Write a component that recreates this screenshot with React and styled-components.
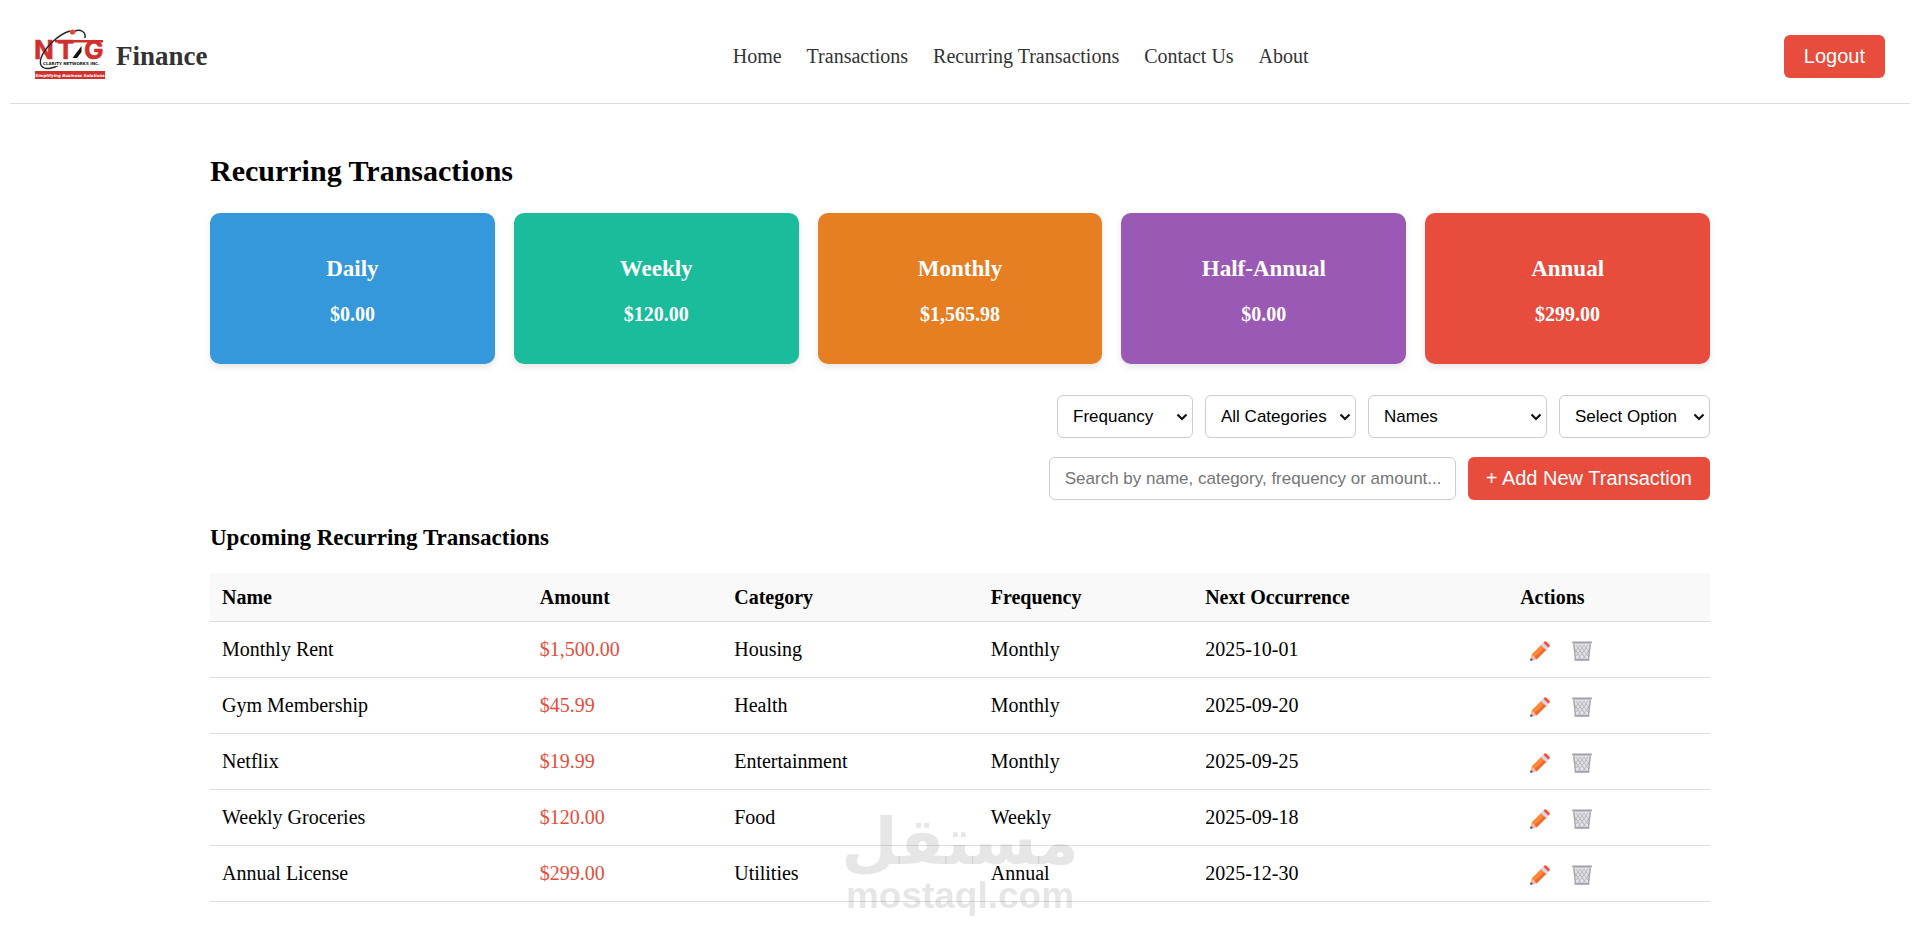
import styled, { createGlobalStyle } from "styled-components";

const GlobalStyle = createGlobalStyle`
  * {
    box-sizing: border-box;
  }

  body {
    margin: 10px;
    background-color: #fff;
    color: #000;
    font-family: "Liberation Serif", "Times New Roman", serif;
    font-size: 20px;
    line-height: 23px;
  }

  h1, h2, h3, p, ul {
    margin: 0;
    padding: 0;
  }
`;

const StyledHeader = styled.header`
  display: flex;
  justify-content: space-between;
  align-items: center;
  padding: 18px 25px 19px;
  border-bottom: 1px solid #ddd;
`;

const Brand = styled.a`
  display: flex;
  align-items: center;
  gap: 11px;
  color: #333;
  font-size: 27px;
  font-weight: bold;
  text-decoration: none;
`;

const NavList = styled.ul`
  display: flex;
  gap: 25px;
  padding-left: 50px;
  list-style: none;
`;

const NavLink = styled.a`
  color: #333;
  text-decoration: none;
`;

const Button = styled.button`
  height: 43px;
  padding: 0 ${({ $padding }) => $padding || "20px"};
  border: none;
  border-radius: 6px;
  background-color: #e74c3c;
  color: #fff;
  font-family: "Liberation Sans", Arial, sans-serif;
  font-size: 20px;
  cursor: pointer;
`;

const Main = styled.main`
  max-width: 1500px;
  margin: 50px auto 0;
`;

const PageTitle = styled.h1`
  font-size: 30px;
  line-height: 34px;
`;

const SectionTitle = styled.h2`
  margin-top: 24px;
  font-size: 23px;
  line-height: 27px;
`;

const SummaryGrid = styled.section`
  display: grid;
  grid-template-columns: repeat(5, 1fr);
  gap: 19px;
  margin-top: 25px;
`;

const SummaryCard = styled.article`
  display: flex;
  flex-direction: column;
  align-items: center;
  gap: 20px;
  padding: 42px 19px 38px;
  border-radius: 10px;
  background-color: ${({ $color }) => $color};
  box-shadow: 0 3px 6px rgba(0, 0, 0, 0.1);
  color: #fff;
  font-weight: bold;
`;

const CardTitle = styled.h3`
  font-size: 23px;
  line-height: 28px;
`;

const Toolbar = styled.section`
  display: flex;
  flex-direction: column;
  gap: 19px;
  margin-top: 31px;
`;

const ToolbarRow = styled.div`
  display: flex;
  justify-content: flex-end;
  gap: 12px;
`;

const SelectBox = styled.span`
  display: grid;
  align-items: center;
  width: ${({ $width }) => $width};

  > * {
    grid-area: 1 / 1;
  }

  svg {
    justify-self: end;
    margin-right: 5px;
    pointer-events: none;
  }
`;

const StyledSelect = styled.select`
  appearance: none;
  width: 100%;
  height: 43px;
  padding: 0 15px;
  border: 1px solid #ccc;
  border-radius: 6px;
  background-color: #fff;
  color: #000;
  font-family: "Liberation Sans", Arial, sans-serif;
  font-size: 17px;
`;

const SearchInput = styled.input`
  width: 407px;
  height: 43px;
  padding: 0 15px;
  border: 1px solid #ccc;
  border-radius: 6px;
  font-family: "Liberation Sans", Arial, sans-serif;
  font-size: 17px;

  &::placeholder {
    color: #757575;
  }
`;

const Table = styled.table`
  width: 100%;
  margin-top: 22px;
  border-spacing: 0;
`;

const HeadCell = styled.th`
  padding: 13px 12px 12px;
  border-bottom: 1px solid #ddd;
  background-color: #f9f9f9;
  text-align: left;
`;

const Cell = styled.td`
  height: 56px;
  padding: 0 12px;
  border-bottom: 1px solid #ddd;
  color: ${({ $amount }) => ($amount ? "#e74c3c" : "inherit")};
`;

const Actions = styled.div`
  display: flex;
`;

const IconButton = styled.button`
  display: flex;
  padding: 3px 12px 0 10px;
  border: none;
  background: none;
  cursor: pointer;
`;

const Watermark = styled.div`
  position: fixed;
  left: 50%;
  bottom: 19px;
  transform: translateX(-50%);
  color: rgba(128, 128, 128, 0.2);
  text-align: center;
  pointer-events: none;
`;

const WatermarkName = styled.div`
  font-family: "DejaVu Sans", sans-serif;
  font-size: 65px;
  font-weight: bold;
  line-height: 68px;
`;

const WatermarkDomain = styled.div`
  font-family: "Liberation Sans", Arial, sans-serif;
  font-size: 37px;
  font-weight: bold;
  line-height: 40px;
`;

const navItems = [
  "Home",
  "Transactions",
  "Recurring Transactions",
  "Contact Us",
  "About",
];

const summaries = [
  { title: "Daily", total: "$0.00", color: "#3498db" },
  { title: "Weekly", total: "$120.00", color: "#1abc9c" },
  { title: "Monthly", total: "$1,565.98", color: "#e67e22" },
  { title: "Half-Annual", total: "$0.00", color: "#9b59b6" },
  { title: "Annual", total: "$299.00", color: "#e74c3c" },
];

const filters = [
  { label: "Frequancy", width: "136px" },
  { label: "All Categories", width: "151px" },
  { label: "Names", width: "179px" },
  { label: "Select Option", width: "151px" },
];

const columns = [
  "Name",
  "Amount",
  "Category",
  "Frequency",
  "Next Occurrence",
  "Actions",
];

const transactions = [
  ["Monthly Rent", "$1,500.00", "Housing", "Monthly", "2025-10-01"],
  ["Gym Membership", "$45.99", "Health", "Monthly", "2025-09-20"],
  ["Netflix", "$19.99", "Entertainment", "Monthly", "2025-09-25"],
  ["Weekly Groceries", "$120.00", "Food", "Weekly", "2025-09-18"],
  ["Annual License", "$299.00", "Utilities", "Annual", "2025-12-30"],
];

function Logo() {
  return (
    <svg width="70" height="56" viewBox="0 0 70 56" aria-hidden="true">
      <g
        fill="#d0312d"
        stroke="#d0312d"
        strokeWidth="0.5"
        fontFamily="Inter, sans-serif"
        fontSize="26"
      >
        <text x="-1" y="31">
          N
        </text>
        <text x="22" y="31">
          T
        </text>
        <text x="49" y="31">
          G
        </text>
      </g>
      <path d="M20 13.300h48" fill="none" stroke="#d0312d" strokeWidth="2.500" />
      <path
        d="M35 3C24 6 10 19 6 30C4 37 7 41 14 40.500C19 40 23 38 26 36"
        fill="none"
        stroke="#23232b"
        strokeWidth="1.400"
      />
      <path
        d="M40 3C46 1 51 4 50 10"
        fill="none"
        stroke="#23232b"
        strokeWidth="1.500"
      />
      <path d="M46.500 18L37.500 30h4.500l4.500-6z" fill="#111" />
      <circle cx="37.500" cy="4" r="2.600" fill="#e8432e" />
      <rect x="8" y="32" width="62" height="6" fill="#fff" />
      <text
        x="8"
        y="37"
        fill="#111"
        fontFamily="DejaVu Sans, sans-serif"
        fontSize="4"
        fontWeight="bold"
      >
        CLARITY NETWORKS INC.
      </text>
      <rect y="43" width="70" height="8" fill="#d0312d" />
      <text
        x="35"
        y="49"
        fill="#fff"
        textAnchor="middle"
        fontFamily="DejaVu Sans, sans-serif"
        fontSize="4"
        fontStyle="italic"
      >
        Simplifying Business Solutions
      </text>
    </svg>
  );
}

function ChevronIcon() {
  return (
    <svg width="12" height="8" viewBox="0 0 12 8" aria-hidden="true">
      <path
        d="M1.500 1.500L6 6l4.500-4.500"
        fill="none"
        stroke="#111"
        strokeWidth="2.200"
      />
    </svg>
  );
}

function PencilIcon() {
  return (
    <svg width="20" height="20" viewBox="0 0 20 20" aria-hidden="true">
      <path d="M1.500 13.500L12 3l5 5L6.500 18.500z" fill="#ff8a35" />
      <path d="M4.500 16.500L15 6l2 2L6.500 18.500z" fill="#f4662f" />
      <path d="M1.500 13.500L0.300 19.700L6.500 18.500z" fill="#f0b8a8" />
      <path d="M0.700 17L0.200 19.800L3 19.300z" fill="#463a4b" />
      <path d="M11 4l2.500-2.500l5 5l-2.500 2.500z" fill="#dfd3ef" />
      <path
        d="M13.300 1.700L14.500 0.600Q15.500 -.2 16.500.7L19.300 3.500Q20.200 4.500 19.400 5.500L18.300 6.700z"
        fill="#f4543f"
      />
    </svg>
  );
}

function TrashIcon() {
  return (
    <svg width="20" height="20" viewBox="0 0 20 20" aria-hidden="true">
      <path d="M1.500 2h17L17 18H3z" fill="#e4e2e7" />
      <path
        d="M4 4l10 14M8 4l8 11M12 4l5 7M3 8l6 10M16 4L6 18M12 4L4 15M8 4L3 11M17 9l-6 9"
        stroke="#b8b4be"
        strokeWidth="1"
      />
      <path
        d="M1.800 3L3.500 18.500M18.200 3L16.500 18.500"
        stroke="#aaa6b0"
        strokeWidth="1.500"
      />
      <rect y="0.500" width="20" height="2" rx="1" fill="#a39fa9" />
      <rect x="2.500" y="18" width="15" height="1.800" rx="0.900" fill="#a39fa9" />
    </svg>
  );
}

function Select({ label, width }) {
  return (
    <SelectBox $width={width}>
      <StyledSelect aria-label={label}>
        <option>{label}</option>
      </StyledSelect>
      <ChevronIcon />
    </SelectBox>
  );
}

function TransactionRow({ transaction }) {
  const [name, amount, category, frequency, nextDate] = transaction;

  return (
    <tr>
      <Cell>{name}</Cell>
      <Cell $amount>{amount}</Cell>
      <Cell>{category}</Cell>
      <Cell>{frequency}</Cell>
      <Cell>{nextDate}</Cell>
      <Cell>
        <Actions>
          <IconButton type="button" aria-label={`Edit ${name}`}>
            <PencilIcon />
          </IconButton>
          <IconButton type="button" aria-label={`Delete ${name}`}>
            <TrashIcon />
          </IconButton>
        </Actions>
      </Cell>
    </tr>
  );
}

function App() {
  return (
    <>
      <GlobalStyle />

      <StyledHeader>
        <Brand href="#home">
          <Logo />
          Finance
        </Brand>
        <nav>
          <NavList>
            {navItems.map((item) => (
              <li key={item}>
                <NavLink href="#">{item}</NavLink>
              </li>
            ))}
          </NavList>
        </nav>
        <Button type="button">Logout</Button>
      </StyledHeader>

      <Main>
        <PageTitle>Recurring Transactions</PageTitle>

        <SummaryGrid>
          {summaries.map(({ title, total, color }) => (
            <SummaryCard key={title} $color={color}>
              <CardTitle>{title}</CardTitle>
              <p>{total}</p>
            </SummaryCard>
          ))}
        </SummaryGrid>

        <Toolbar>
          <ToolbarRow>
            {filters.map(({ label, width }) => (
              <Select key={label} label={label} width={width} />
            ))}
          </ToolbarRow>
          <ToolbarRow>
            <SearchInput
              type="text"
              aria-label="Search transactions"
              placeholder="Search by name, category, frequency or amount..."
            />
            <Button type="button" $padding="18px">
              + Add New Transaction
            </Button>
          </ToolbarRow>
        </Toolbar>

        <SectionTitle>Upcoming Recurring Transactions</SectionTitle>

        <Table>
          <thead>
            <tr>
              {columns.map((column) => (
                <HeadCell key={column}>{column}</HeadCell>
              ))}
            </tr>
          </thead>
          <tbody>
            {transactions.map((transaction) => (
              <TransactionRow key={transaction[0]} transaction={transaction} />
            ))}
          </tbody>
        </Table>
      </Main>

      <Watermark>
        <WatermarkName lang="ar">مستقل</WatermarkName>
        <WatermarkDomain>mostaql.com</WatermarkDomain>
      </Watermark>
    </>
  );
}

export default App;
